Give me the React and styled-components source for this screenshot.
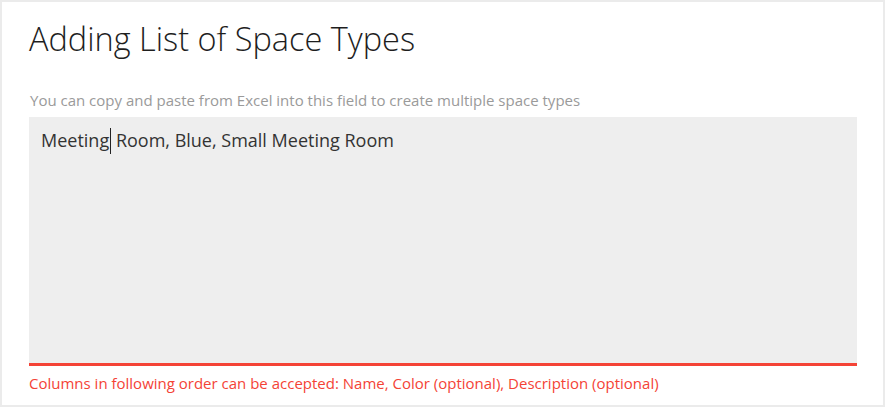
import styled, { createGlobalStyle } from 'styled-components';

const GlobalStyle = createGlobalStyle`
  html, body {
    margin: 0;
    padding: 0;
    background: #ebebeb;
  }
  body {
    font-family: "Open Sans", "Noto Sans", sans-serif;
  }
`;

export default function App() {
  return (
    <>
      <GlobalStyle />
      <Page>
        <Card>
          <Title>Adding List of Space Types</Title>
          <Hint>
            You can copy and paste from Excel into this field to create multiple
            space types
          </Hint>
          <Field>
            <FieldText>
              Meeting
              <Caret />{' '}
              Room, Blue, Small Meeting Room
            </FieldText>
          </Field>
          <ErrorText>
            Columns in following order can be accepted: Name, Color (optional),
            Description (optional)
          </ErrorText>
        </Card>
      </Page>
    </>
  );
}

const Page = styled.div`
  padding: 2px;
  height: 407px;
  box-sizing: border-box;
`;

const Card = styled.section`
  background: #fff;
  height: 403px;
  width: 881px;
  box-sizing: border-box;
  padding: 16px 26px 0 27px;
`;

const Title = styled.h1`
  margin: 0;
  font-size: 32.5px;
  font-weight: 300;
  line-height: 42px;
  color: #1e1e1e;
`;

const Hint = styled.p`
  margin: 30px 0 0 1px;
  font-size: 15px;
  line-height: 20px;
  color: #9a9a9a;
`;

const Field = styled.div`
  margin-top: 7px;
  background: #eeeeee;
  border-bottom: 3px solid #f44336;
  padding: 11px 12px;
  box-sizing: border-box;
  height: 249px;
`;

const FieldText = styled.div`
  font-size: 18px;
  line-height: 24px;
  color: #333;
`;

const Caret = styled.span`
  display: inline-block;
  width: 1px;
  height: 26px;
  margin-left: 1px;
  background: #222;
  vertical-align: -7px;
`;

const ErrorText = styled.p`
  margin: 7px 0 0;
  font-size: 15px;
  line-height: 20px;
  color: #f44336;
`;
